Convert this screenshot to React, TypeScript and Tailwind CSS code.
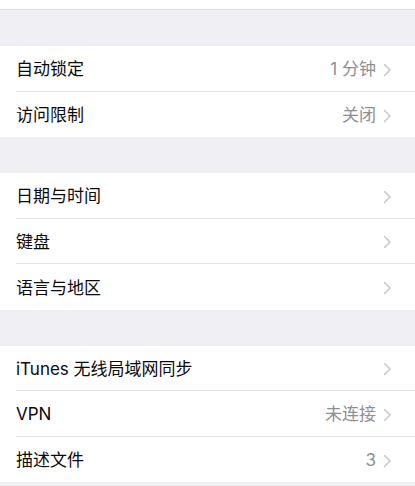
const groups: { label: string; value?: string }[][] = [
  [
    { label: '自动锁定', value: '1 分钟' },
    { label: '访问限制', value: '关闭' },
  ],
  [{ label: '日期与时间' }, { label: '键盘' }, { label: '语言与地区' }],
  [
    { label: 'iTunes 无线局域网同步' },
    { label: 'VPN', value: '未连接' },
    { label: '描述文件', value: '3' },
  ],
];

function Chevron() {
  return (
    <svg width="9" height="14" viewBox="0 0 9 14" className="shrink-0">
      <path d="M1.5 1.5 L7 7 L1.5 12.5" fill="none" stroke="#c7c7cc" strokeWidth="1.5" strokeLinecap="round" strokeLinejoin="round" />
    </svg>
  );
}

export default function App() {
  return (
    <div
      className="h-[486px] w-[415px] overflow-hidden bg-[#efeff4]"
      style={{ fontFamily: 'Inter, "Noto Sans CJK SC", sans-serif' }}
    >
      <div className="h-[10px] border-b border-[#dcdce0] bg-white" />
      {groups.map((rows, gi) => (
        <div key={gi} className="mt-[36px] bg-white">
          {rows.map((row, ri) => (
            <div key={row.label} className="flex h-[45.5px] items-stretch pl-[16px]">
              <div
                className={`flex flex-1 items-center pt-[3px] pr-[23px] ${ri < rows.length - 1 ? 'border-b border-[#e3e3e6]' : ''}`}
              >
                <span className="flex-1 text-[17px] text-[#0a0a0a]">{row.label}</span>
                {row.value && <span className="mr-[7px] text-[17px] text-[#8e8e93]">{row.value}</span>}
                <Chevron />
              </div>
            </div>
          ))}
        </div>
      ))}
    </div>
  );
}
